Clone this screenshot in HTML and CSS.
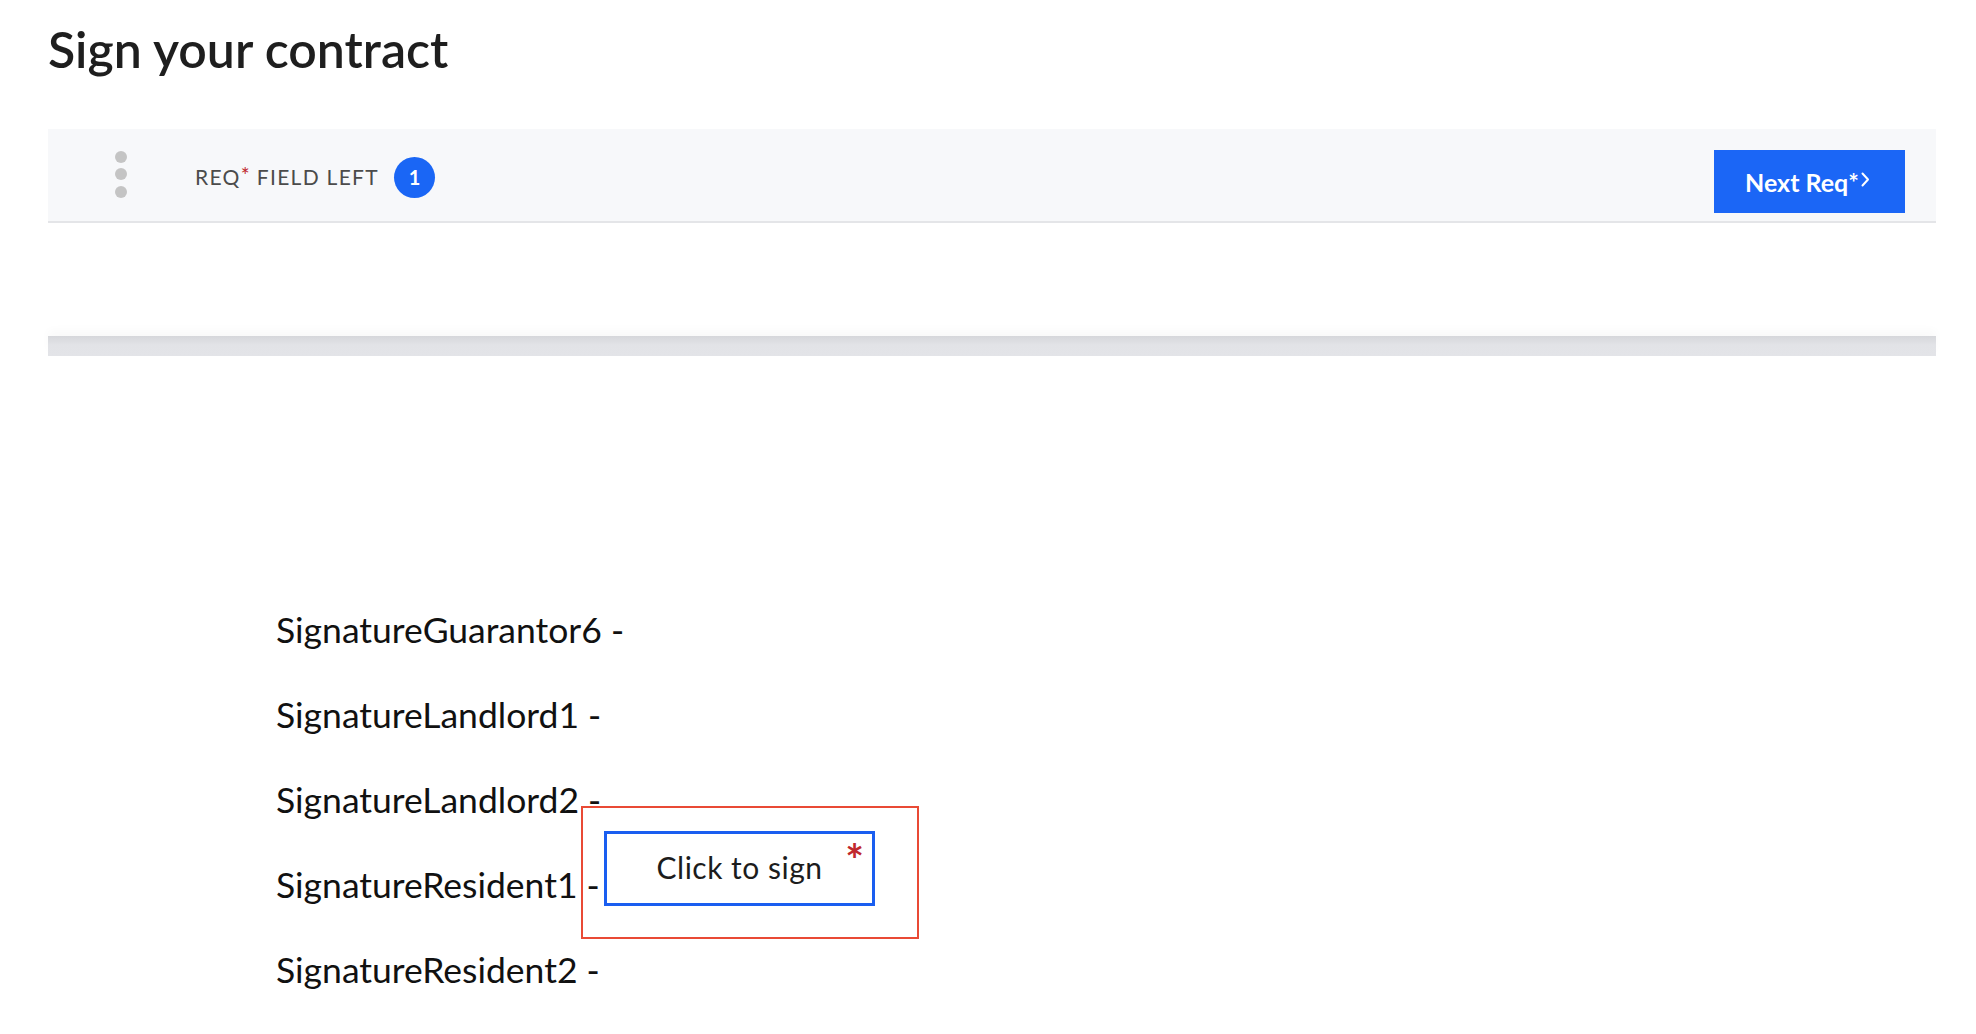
FILE: index.html
```html
<!DOCTYPE html>
<html lang="en">
<head>
<meta charset="utf-8">
<title>Sign your contract</title>
<link rel="stylesheet" href="styles.css">
</head>
<body>
<div class="page">
  <h1 class="title">Sign your contract</h1>
  <div class="toolbar">
    <div class="toolbar-left">
      <div class="kebab"><span></span><span></span><span></span></div>
      <div class="req-label">REQ<span class="req-star">*</span> FIELD LEFT</div>
      <div class="badge">1</div>
    </div>
    <button class="next-btn">Next Req*<svg class="chev" width="9" height="15" viewBox="0 0 9 15"><path d="M1.5 1.5 L7 7.5 L1.5 13.5" fill="none" stroke="#fff" stroke-width="2" stroke-linecap="round" stroke-linejoin="round"/></svg></button>
  </div>
  <div class="page-edge"></div>
  <div class="doc">
    <p class="doc-line">SignatureGuarantor6 -</p>
    <p class="doc-line">SignatureLandlord1 -</p>
    <p class="doc-line">SignatureLandlord2 -</p>
    <p class="doc-line">SignatureResident1 -</p>
    <p class="doc-line">SignatureResident2 -</p>
    <div class="field-focus">
      <div class="sign-field">
        <span class="sign-text">Click to sign</span>
        <span class="sign-star">*</span>
      </div>
    </div>
  </div>
</div>
</body>
</html>
```
FILE: styles.css
```css
html, body {
  margin: 0;
  padding: 0;
  background: #ffffff;
}

.page {
  padding: 0 40px 0 48px;
  font-family: Lato, "Open Sans", sans-serif;
  color: #1f1f1f;
}

.title {
  margin: 18px 0 49px 0;
  font-size: 50px;
  line-height: 62px;
  font-weight: 600;
  color: #1e1e1e;
}

.toolbar {
  height: 92px;
  background: #f7f8fa;
  border-bottom: 2px solid #e4e5e8;
  display: flex;
  justify-content: space-between;
  padding: 0 31px 0 67px;
}

.toolbar-left {
  display: flex;
  align-items: center;
}

.kebab {
  display: flex;
  flex-direction: column;
  gap: 5.5px;
  margin-top: -2px;
}

.kebab span {
  width: 12px;
  height: 12px;
  border-radius: 50%;
  background: #c4c4c4;
}

.req-label {
  margin-left: 68px;
  font-size: 21px;
  letter-spacing: 1.3px;
  color: #4b4b4b;
}

.req-star {
  color: #c0282d;
  font-size: 21px;
  vertical-align: 2px;
  letter-spacing: 0.5px;
}

.badge {
  margin-left: 15px;
  width: 41px;
  height: 41px;
  border-radius: 50%;
  background: #1a66f5;
  color: #ffffff;
  font-size: 20px;
  font-weight: 700;
  display: flex;
  align-items: center;
  justify-content: center;
  margin-top: 4px;
}

.next-btn {
  align-self: flex-start;
  margin-top: 21px;
  width: 191px;
  height: 63px;
  border: 0;
  background: #1b66f6;
  color: #ffffff;
  font-family: Lato, "Open Sans", sans-serif;
  font-size: 25px;
  font-weight: 700;
  display: flex;
  align-items: center;
  justify-content: center;
  gap: 2px;
  padding: 0 4px 0 0;
}

.chev {
  margin-top: -4px;
}

.page-edge {
  margin-top: 113px;
  height: 20px;
  background: linear-gradient(#d6d7db, #e2e3e7 45%, #e3e4e8);
  box-shadow: 0 -6px 10px rgba(0, 0, 0, 0.025);
}

.doc {
  position: relative;
  padding: 231px 0 0 228px;
}

.doc-line {
  margin: 0;
  font-size: 35.5px;
  line-height: 85px;
  color: #111111;
  font-family: Lato, "Open Sans", sans-serif;
}

.field-focus {
  position: absolute;
  left: 533px;
  top: 450px;
  width: 334px;
  height: 129px;
  border: 2px solid #e94a35;
}

.sign-field {
  position: relative;
  margin: 23px 0 0 21px;
  width: 265px;
  height: 69px;
  border: 3px solid #1a5ef0;
  display: flex;
  align-items: center;
  justify-content: center;
}

.sign-text {
  font-size: 30px;
  letter-spacing: 0.5px;
  color: #1c1c1c;
  margin-top: -4px;
}

.sign-star {
  position: absolute;
  right: 8px;
  top: 8px;
  font-size: 44px;
  font-weight: 700;
  line-height: 34px;
  color: #c0282d;
}
```
